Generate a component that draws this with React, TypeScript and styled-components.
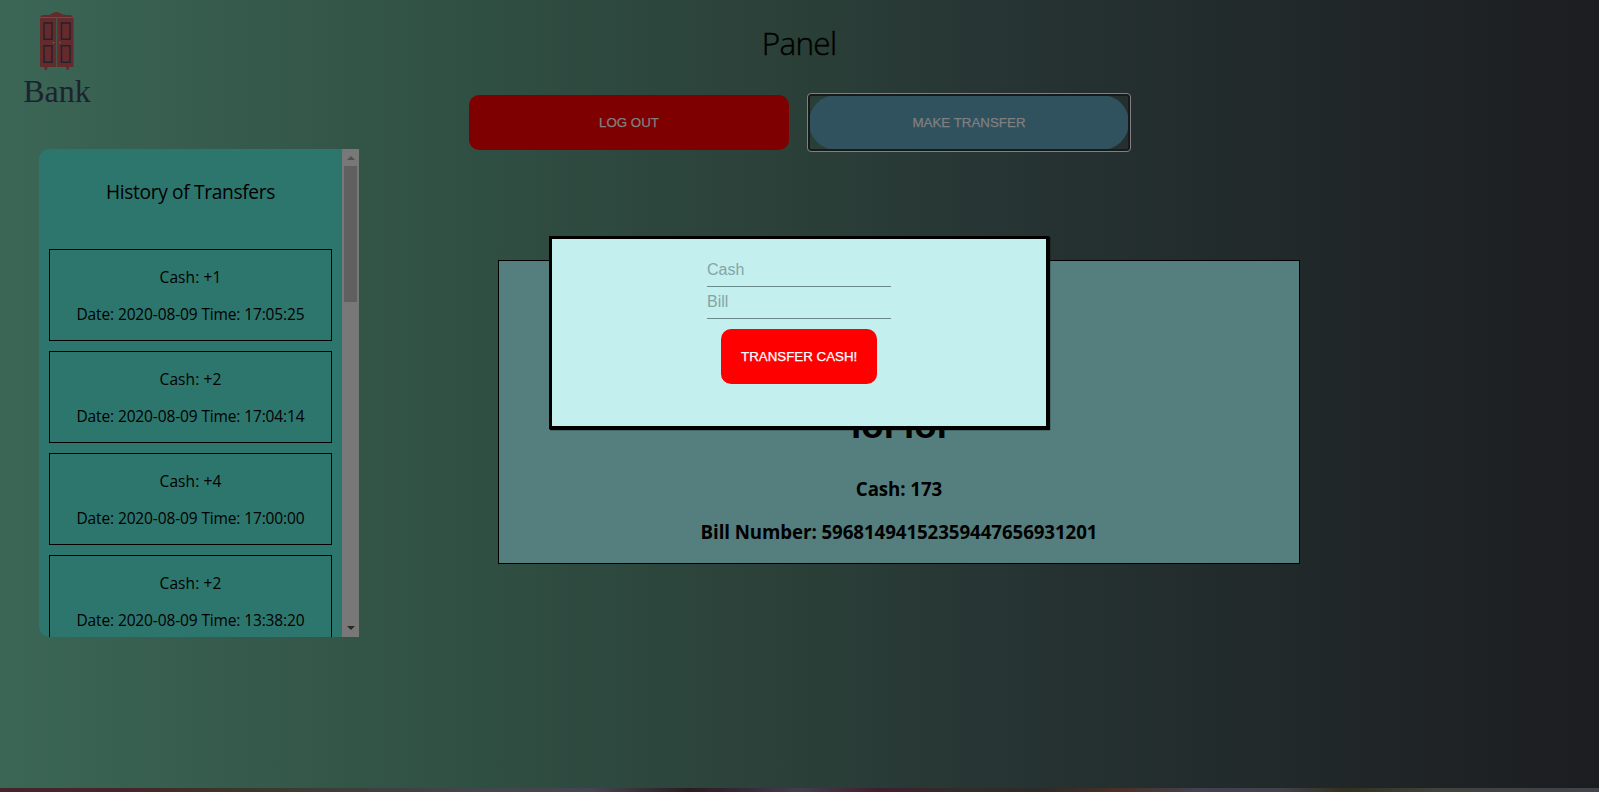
import React from 'react';
import styled, { createGlobalStyle } from 'styled-components';

const Global = createGlobalStyle`
  * { box-sizing: border-box; }
  body { margin: 0; overflow: hidden; font-family: "Open Sans", "Noto Sans", sans-serif; color: #000; }
  h1, h2, h3, p { margin: 0; font-weight: 400; }
  button, input { font-family: "Liberation Sans", Arial, sans-serif; }
`;

const Page = styled.div`
  display: flex;
  flex-direction: column;
  width: 1599px;
  height: 792px;
`;

const Screen = styled.main`
  position: relative;
  flex: 1;
  display: grid;
  grid-template-columns: 469px 1fr;
  grid-template-rows: 149px 1fr;
  background: linear-gradient(90deg, #3b6656 0%, #304f43 30%, #2b4039 49%, #253131 67%, #1c1d21 100%);
`;

const Footer = styled.div`
  height: 4px;
  background: linear-gradient(90deg, #48242a 0%, #46252a 8%, #3d3429 14%, #43464d 30%, #45454f 37%, #2b1c22 43%, #33202e 45%, #413e4b 50%, #421d2e 55%, #302c2a 60%, #2c2a28 65%, #4b2f27 70%, #424250 75%, #42424c 80%, #33301f 84%, #40423e 90%, #42434d 100%);
`;

const Brand = styled.div`
  display: flex;
  flex-direction: column;
  align-items: center;
  width: 114px;
  padding-top: 12px;
`;

const BrandName = styled.span`
  font: 32px/38px "Liberation Serif", serif;
  margin-top: 2px;
  color: #1d232e;
`;

const Header = styled.header`
  width: 660px;
  display: flex;
  flex-direction: column;
  align-items: center;
`;

const Title = styled.h1`
  flex: none;
  margin-top: 21px;
  height: 74px;
  font-size: 31.5px;
  line-height: 44px;
  font-weight: 300;
  letter-spacing: -0.7px;
  -webkit-text-stroke: 0.4px #000;
`;

const Actions = styled.div`
  display: flex;
  gap: 20px;
`;

const Button = styled.button`
  height: 55px;
  padding: 0 20px 1px;
  border: 0;
  border-radius: 10px;
  background: #f00;
  color: #fff;
  font-size: 13.333px;
  font-weight: 400;
  -webkit-text-stroke: 0.25px currentColor;
  text-transform: uppercase;
  white-space: nowrap;
`;

const LogOut = styled(Button)`
  width: 320px;
  background: #7f0000;
  color: #808080;
`;

const MakeTransfer = styled(LogOut)`
  position: relative;
  border-radius: 30px;
  background: #30525f;
  &::after {
    content: "";
    position: absolute;
    inset: -2px;
    border: 1px solid #808080;
    border-radius: 4px;
    box-shadow: inset 0 0 0 2px #18191b;
  }
`;

const History = styled.section`
  display: flex;
  width: 320px;
  height: 488px;
  margin-left: 39px;
  overflow: hidden;
  border-radius: 10px 0 0 10px;
  background: #2d766d;
`;

const HistoryList = styled.div`
  flex: 1;
  display: flex;
  flex-direction: column;
  gap: 10px;
  padding: 0 10px;
  text-align: center;
`;

const HistoryTitle = styled.h2`
  flex: none;
  height: 90px;
  padding-top: 29px;
  font-size: 19.2px;
  line-height: 28px;
  letter-spacing: -0.36px;
`;

const Transfer = styled.article`
  flex: none;
  display: flex;
  flex-direction: column;
  gap: 15px;
  height: 92px;
  padding-top: 16px;
  border: 1px solid #000;
  font-size: 15.5px;
  line-height: 22px;
  white-space: nowrap;
`;

const TransferLine = styled.p<{ $tight?: boolean }>`
  letter-spacing: ${p => (p.$tight ? '-0.13px' : '0.1px')};
`;

const Scrollbar = styled.div`
  display: flex;
  flex-direction: column;
  width: 17px;
  background: #787878;
`;

const ScrollArrow = styled.div<{ $down?: boolean }>`
  display: flex;
  align-items: center;
  justify-content: center;
  height: 17px;
  padding: ${p => (p.$down ? '0 0 1px' : '1px 0 0')};
  margin-top: ${p => (p.$down ? 'auto' : '0')};
  &::before {
    content: "";
    border: 4px solid transparent;
    border-width: ${p => (p.$down ? '4px 4px 0' : '0 4px 4px')};
    border-top-color: ${p => (p.$down ? '#282828' : 'transparent')};
    border-bottom-color: ${p => (p.$down ? 'transparent' : '#505050')};
  }
`;

const ScrollThumb = styled.div`
  height: 136px;
  margin: 0 2px;
  background: #606060;
`;

const Account = styled.section`
  display: flex;
  flex-direction: column;
  align-items: center;
  justify-content: flex-end;
  width: 802px;
  height: 304px;
  margin: 111px 0 0 29px;
  padding-bottom: 18px;
  border: 1px solid #000;
  background: #557f7e;
`;

const Owner = styled.h2`
  font: 700 36.8px/44px "Liberation Sans", Arial, sans-serif;
  margin-bottom: 28px;
`;

const AccountLine = styled.h3`
  font-size: 18.72px;
  line-height: 26px;
  font-weight: 700;
  letter-spacing: -0.08px;
  & + & { margin-top: 17px; }
`;

const Modal = styled.form`
  position: absolute;
  left: 549px;
  top: 236px;
  display: flex;
  flex-direction: column;
  align-items: center;
  width: 500px;
  height: 193px;
  padding-top: 16px;
  border: 3px solid #000;
  background: #c3efef;
  box-shadow: 1px 1px 1px #000;
`;

const Field = styled.input`
  width: 184px;
  height: 32px;
  padding: 0 0 1px;
  border: 0;
  border-bottom: 1px solid #6a8a8c;
  outline: 0;
  background: transparent;
  font-size: 16px;
  &::placeholder { color: #84a5a6; opacity: 1; }
`;

const Submit = styled(Button)`
  width: 156px;
  margin-top: 10px;
`;

const transfers = [
  { cash: '+1', time: '17:05:25' },
  { cash: '+2', time: '17:04:14' },
  { cash: '+4', time: '17:00:00' },
  { cash: '+2', time: '13:38:20' },
];

const Wardrobe = () => (
  <svg width="36" height="58" viewBox="0 0 36 58">
    <path d="M1.500 5V4L4 3H9C13 3 13 0 17.500 0S22 3 27 3H31L33.500 4V5Z" fill="#652a2b" />
    <path d="M1 6H17.200V55H8.500L8 58H6L5 55H1Z M18.200 6H34.500V55H30.500L29.500 58H27.500L27 55H18.200Z" fill="#652a2b" />
    <path d="M5 11H13V27.200H5Z M22.500 11H31V27.200H22.500Z M5 33.700H13V50.200H5Z M22.500 33.700H31V50.200H22.500Z" fill="none" stroke="#20222d" strokeWidth="1.4" />
    <circle cx="14.700" cy="30.600" r=".8" fill="#5c6b58" />
    <circle cx="20.800" cy="30.600" r=".8" fill="#5c6b58" />
  </svg>
);

export default function App() {
  return (
    <>
      <Global />
      <Page>
        <Screen>
          <Brand>
            <Wardrobe />
            <BrandName>Bank</BrandName>
          </Brand>
          <Header>
            <Title>Panel</Title>
            <Actions>
              <LogOut>Log out</LogOut>
              <MakeTransfer>Make transfer</MakeTransfer>
            </Actions>
          </Header>
          <History>
            <HistoryList>
              <HistoryTitle>History of Transfers</HistoryTitle>
              {transfers.map(t => (
                <Transfer key={t.time}>
                  <TransferLine>Cash: {t.cash}</TransferLine>
                  <TransferLine $tight>Date: 2020-08-09 Time: {t.time}</TransferLine>
                </Transfer>
              ))}
            </HistoryList>
            <Scrollbar>
              <ScrollArrow />
              <ScrollThumb />
              <ScrollArrow $down />
            </Scrollbar>
          </History>
          <Account>
            <Owner>lol lol</Owner>
            <AccountLine>Cash: 173</AccountLine>
            <AccountLine>Bill Number: 59681494152359447656931201</AccountLine>
          </Account>
          <Modal>
            <Field placeholder="Cash" />
            <Field placeholder="Bill" />
            <Submit type="button">Transfer cash!</Submit>
          </Modal>
        </Screen>
        <Footer />
      </Page>
    </>
  );
}
